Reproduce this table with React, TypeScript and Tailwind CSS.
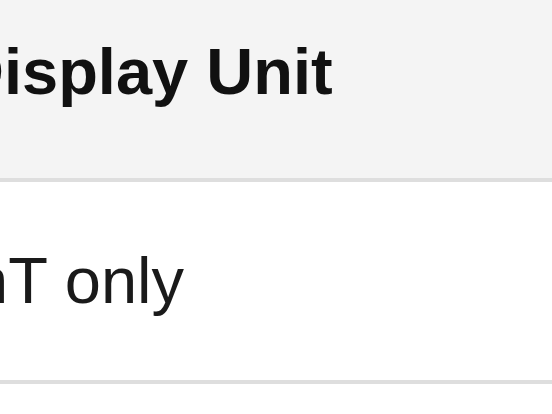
export default function App() {
  return (
    <div className="w-[552px] h-[414px] overflow-hidden bg-white" style={{ fontFamily: '"Liberation Sans", Arial, sans-serif' }}>
      <div className="h-[182px] bg-[#f4f4f4] pt-[39px] border-b-[4px] border-[#dedede]">
        <div className="ml-[-43px] text-[65px] leading-none font-bold text-[#111] whitespace-nowrap">Display Unit</div>
      </div>
      <div className="h-[202px] pt-[66px] border-b-[4px] border-[#dedede]">
        <div className="ml-[-28px] text-[65px] leading-none text-[#1a1a1a] whitespace-nowrap">nT only</div>
      </div>
    </div>
  );
}
